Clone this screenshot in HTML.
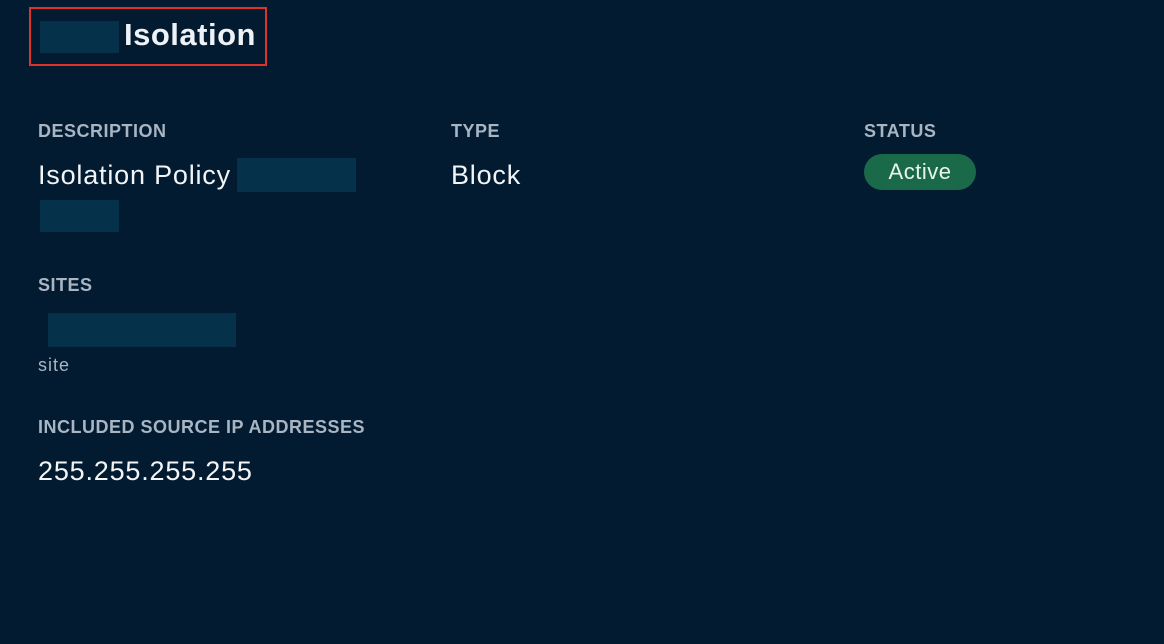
<!DOCTYPE html>
<html><head><style>
body{margin:0;width:1164px;height:644px;background:#031b31;font-family:"Liberation Sans",sans-serif;position:relative;overflow:hidden;color:#fff}
.a{position:absolute;white-space:nowrap}
.lbl{font-size:18px;font-weight:bold;color:#a8b5c3;letter-spacing:0.5px}
.val{font-size:27px;color:#f2f4f6;letter-spacing:0.8px}
.r{position:absolute;background:#05324a}
</style></head><body>
<div class="a" style="left:29px;top:7px;width:234px;height:55px;border:2px solid #e0312a"></div>
<div class="r" style="left:40px;top:21px;width:79px;height:32px"></div>
<div class="a" style="left:124px;top:17px;font-size:31px;font-weight:bold;color:#eef1f5;letter-spacing:0.5px">Isolation</div>

<div class="a lbl" style="left:38px;top:121px">DESCRIPTION</div>
<div class="a val" style="left:38px;top:160px">Isolation Policy</div>
<div class="r" style="left:237px;top:158px;width:119px;height:34px"></div>
<div class="r" style="left:40px;top:200px;width:79px;height:32px"></div>

<div class="a lbl" style="left:451px;top:121px">TYPE</div>
<div class="a val" style="left:451px;top:160px">Block</div>

<div class="a lbl" style="left:864px;top:121px">STATUS</div>
<div class="a" style="left:864px;top:154px;width:112px;height:36px;border-radius:18px;background:#1a6a4a;color:#e8f5ee;font-size:22px;text-align:center;line-height:35px;letter-spacing:0.5px">Active</div>

<div class="a lbl" style="left:38px;top:275px">SITES</div>
<div class="r" style="left:48px;top:313px;width:188px;height:34px"></div>
<div class="a" style="left:38px;top:355px;font-size:18px;color:#a8b5c3;letter-spacing:1px">site</div>

<div class="a lbl" style="left:38px;top:417px">INCLUDED SOURCE IP ADDRESSES</div>
<div class="a val" style="left:38px;top:456px">255.255.255.255</div>
</body></html>
